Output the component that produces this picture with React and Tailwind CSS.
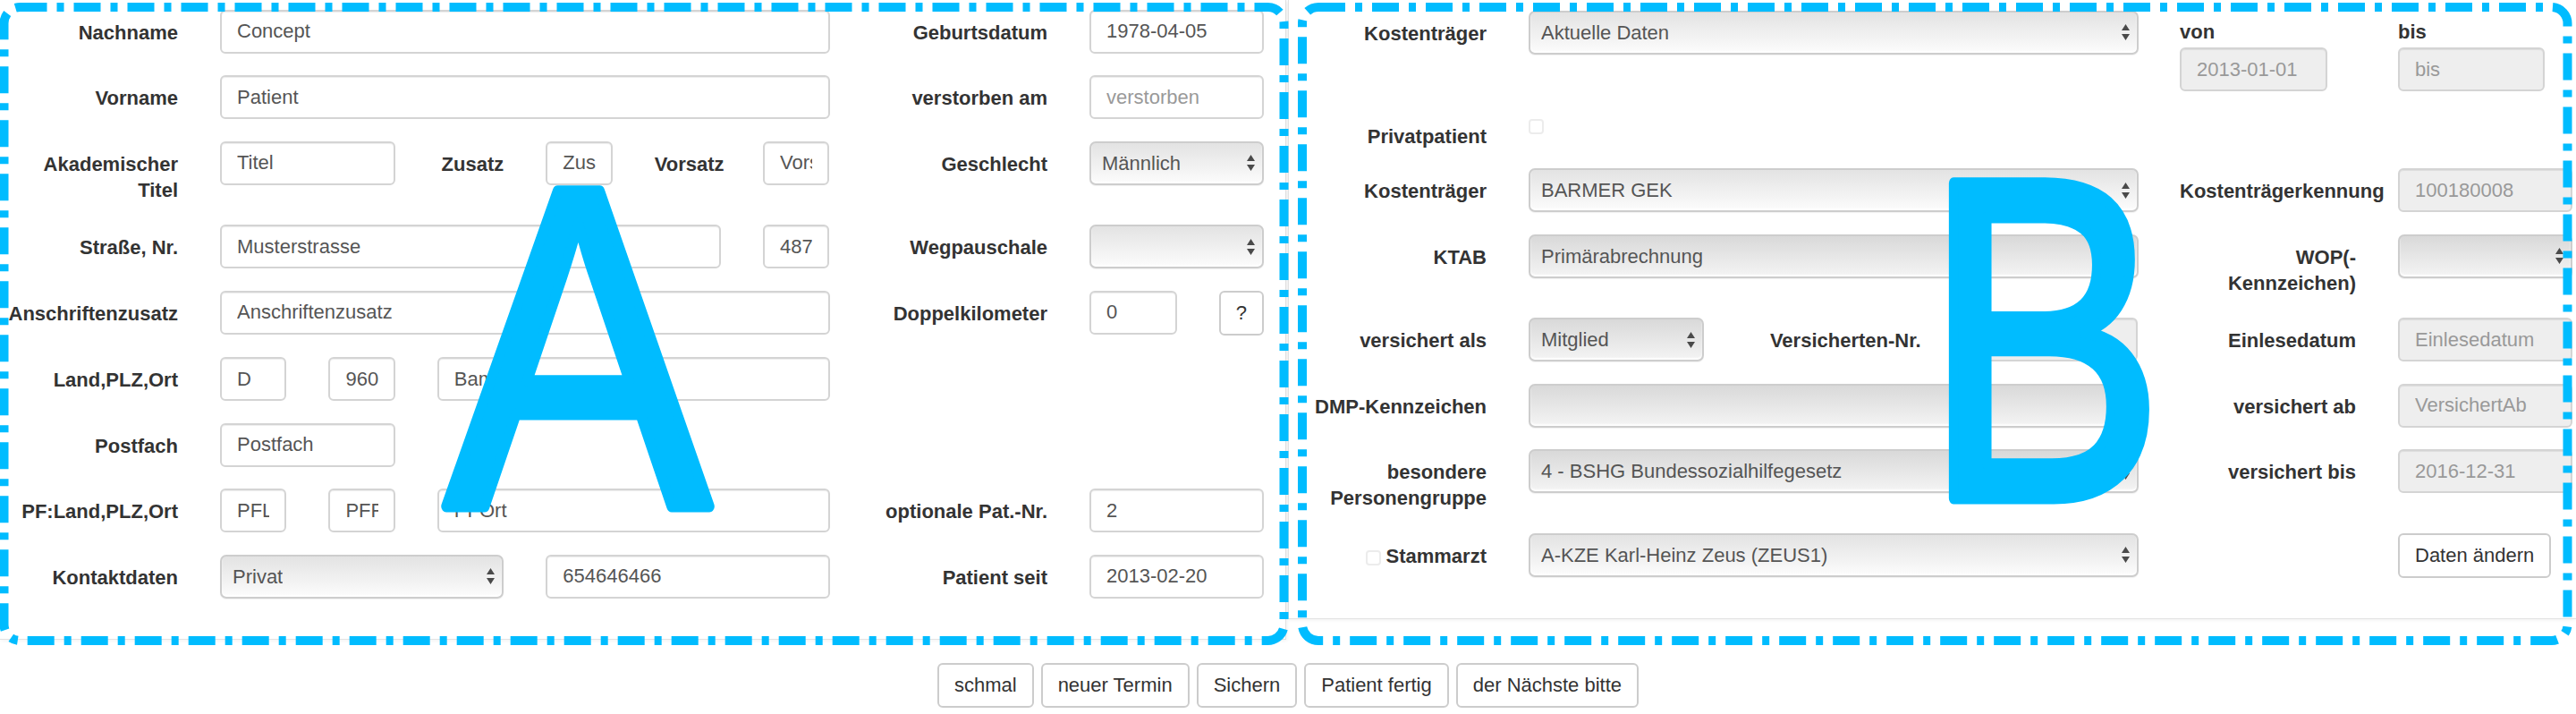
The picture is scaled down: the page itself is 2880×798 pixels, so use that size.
import React from 'react';

const inputBase =
  "h-[49px] w-full min-w-0 rounded-[6px] border-2 border-[#d4d4d4] px-[17px] text-[22px] outline-none shadow-[inset_0_1px_1px_rgba(0,0,0,0.075)] placeholder:text-[#999]";
const inputCls = inputBase + " bg-white text-[#555]";
const disabledCls = inputBase + " bg-[#eee] text-[#999]";

const Arrows = () => (
  <svg width="9" height="18" viewBox="0 0 9 18" className="shrink-0">
    <path d="M4.5 0 L9 7 H0 Z M0 11 H9 L4.5 18 Z" fill="#4a4a4a" />
  </svg>
);

const Select = ({ value, disabled, className = "" }) => (
  <div
    className={
      (disabled
        ? "bg-linear-to-b from-[#d9d9d9] to-[#f4f4f4] "
        : "bg-linear-to-b from-[#e3e3e3] to-[#fcfcfc] ") +
      "flex h-[49px] min-w-0 items-center justify-between rounded-[7px] border-2 border-[#cdcdcd] pl-[12px] pr-[8px] text-[#555] shadow-[inset_0_-2px_2px_rgba(255,255,255,0.9),0_1px_1px_rgba(0,0,0,0.06)] " +
      className
    }
  >
    <span className="truncate">{value}</span>
    <Arrows />
  </div>
);

const Label = ({ children, className = "" }) => (
  <div className={"shrink-0 pt-[11px] text-right font-bold leading-[29px] text-[#333] " + className}>
    {children}
  </div>
);

const Btn = ({ children, className = "" }) => (
  <button className={"h-[50px] rounded-[6px] border-2 border-[#ccc] bg-white px-[17px] text-[22px] leading-[30px] text-[#333] " + className}>
    {children}
  </button>
);

const Check = ({ className = "" }) => (
  <span className={"block h-[17px] w-[17px] rounded-[4px] border-2 border-[#ececec] bg-white " + className} />
);

// one form row: label, 12 column area, optional label + control on the right
const Row = ({ label, right, rightLabel, className = "mb-[24.5px]", children }) => (
  <div className={"flex items-start " + className}>
    {label}
    <div className="ml-[47px] grid w-[681.5px] shrink-0 grid-cols-12 gap-x-[47px]">{children}</div>
    {rightLabel !== undefined && <Label className="ml-[46.5px] w-[197px]">{rightLabel}</Label>}
    {right && <div className="ml-[47px] w-[195px] shrink-0">{right}</div>}
  </div>
);

const PanelA = () => (
  <div className="w-[1438px] shrink-0 border-r border-b border-[#e2e2e2] pt-[10.5px] pb-[45.5px] shadow-[1px_1px_4px_rgba(0,0,0,0.06)]">
    <Row label={<Label className="w-[199px]">Nachname</Label>} rightLabel="Geburtsdatum" right={<input readOnly defaultValue="1978-04-05" className={inputCls} />}>
      <input readOnly defaultValue="Concept" className={inputCls + " col-span-12"} />
    </Row>
    <Row label={<Label className="w-[199px]">Vorname</Label>} rightLabel="verstorben am" right={<input readOnly placeholder="verstorben" className={inputCls} />}>
      <input readOnly defaultValue="Patient" className={inputCls + " col-span-12"} />
    </Row>
    <Row label={<Label className="w-[199px]">Akademischer<br />Titel</Label>} rightLabel="Geschlecht" right={<Select value="Männlich" />}>
      <input readOnly defaultValue="Titel" className={inputCls + " col-span-4"} />
      <Label className="col-span-2">Zusatz</Label>
      <input readOnly defaultValue="Zus" className={inputCls + " col-span-2"} />
      <Label className="col-span-2">Vorsatz</Label>
      <input readOnly defaultValue="Vors" className={inputCls + " col-span-2"} />
    </Row>
    <Row label={<Label className="w-[199px]">Straße, Nr.</Label>} rightLabel="Wegpauschale" right={<Select value="" />}>
      <input readOnly defaultValue="Musterstrasse" className={inputCls + " col-span-10"} />
      <input readOnly defaultValue="487" className={inputCls + " col-span-2"} />
    </Row>
    <Row
      label={<Label className="w-[199px]">Anschriftenzusatz</Label>}
      rightLabel="Doppelkilometer"
      right={
        <div className="flex gap-[47px]">
          <input readOnly defaultValue="0" className={inputCls + " w-[75px]"} />
          <Btn>?</Btn>
        </div>
      }
    >
      <input readOnly defaultValue="Anschriftenzusatz" className={inputCls + " col-span-12"} />
    </Row>
    <Row label={<Label className="w-[199px]">Land,PLZ,Ort</Label>}>
      <input readOnly defaultValue="D" className={inputCls + " col-span-2"} />
      <input readOnly defaultValue="960" className={inputCls + " col-span-2"} />
      <input readOnly defaultValue="Bamberg" className={inputCls + " col-span-8"} />
    </Row>
    <Row label={<Label className="w-[199px]">Postfach</Label>}>
      <input readOnly defaultValue="Postfach" className={inputCls + " col-span-4"} />
    </Row>
    <Row label={<Label className="w-[199px]">PF:Land,PLZ,Ort</Label>} rightLabel="optionale Pat.-Nr." right={<input readOnly defaultValue="2" className={inputCls} />}>
      <input readOnly defaultValue="PFL" className={inputCls + " col-span-2"} />
      <input readOnly defaultValue="PFF" className={inputCls + " col-span-2"} />
      <input readOnly defaultValue="PFOrt" className={inputCls + " col-span-8"} />
    </Row>
    <Row className="" label={<Label className="w-[199px]">Kontaktdaten</Label>} rightLabel="Patient seit" right={<input readOnly defaultValue="2013-02-20" className={inputCls} />}>
      <Select value="Privat" className="col-span-6" />
      <input readOnly defaultValue="654646466" className={inputCls + " col-span-6"} />
    </Row>
  </div>
);

const PanelB = () => (
  <div className="ml-[2px] w-[1440px] shrink-0 border-l border-b border-[#e2e2e2] pl-[22px] pt-[11.5px] pb-[45.5px] shadow-[-1px_1px_4px_rgba(0,0,0,0.06)]">
    <div className="mb-[24.5px] flex items-start">
      <Label className="w-[199px]">Kostenträger</Label>
      <div className="ml-[47px] w-[681.5px] shrink-0">
        <Select value="Aktuelle Daten" />
      </div>
      <div className="ml-[46.5px] w-[197px] shrink-0 pt-[9.5px]">
        <div className="font-bold leading-[29px] text-[#333]">von</div>
        <input readOnly defaultValue="2013-01-01" className={disabledCls + " mt-[3px] !w-[165px]"} />
      </div>
      <div className="ml-[47px] w-[195px] shrink-0 pt-[9.5px]">
        <div className="font-bold leading-[29px] text-[#333]">bis</div>
        <input readOnly placeholder="bis" className={disabledCls + " mt-[3px] !w-[164px]"} />
      </div>
    </div>
    <Row className="mb-[24.5px] h-[37px]" label={<Label className="w-[199px]">Privatpatient</Label>}>
      <Check className="col-span-1 mt-[6px]" />
    </Row>
    <Row label={<Label className="w-[199px]">Kostenträger</Label>} rightLabel="Kostenträgerkennung" right={<input readOnly defaultValue="100180008" className={disabledCls} />}>
      <Select value="BARMER GEK" className="col-span-12" />
    </Row>
    <Row label={<Label className="w-[199px]">KTAB</Label>} rightLabel={<>WOP(-<br />Kennzeichen)</>} right={<Select value="" disabled />}>
      <Select value="Primärabrechnung" disabled className="col-span-12" />
    </Row>
    <Row label={<Label className="w-[199px]">versichert als</Label>} rightLabel="Einlesedatum" right={<input readOnly placeholder="Einlesedatum" className={disabledCls} />}>
      <Select value="Mitglied" disabled className="col-span-4" />
      <Label className="col-span-4">Versicherten-Nr.</Label>
      <input readOnly className={disabledCls + " col-span-4"} />
    </Row>
    <Row label={<Label className="w-[199px]">DMP-Kennzeichen</Label>} rightLabel="versichert ab" right={<input readOnly placeholder="VersichertAb" className={disabledCls} />}>
      <Select value="" disabled className="col-span-12" />
    </Row>
    <Row label={<Label className="w-[199px]">besondere<br />Personengruppe</Label>} rightLabel="versichert bis" right={<input readOnly defaultValue="2016-12-31" className={disabledCls} />}>
      <Select value="4 - BSHG Bundessozialhilfegesetz" disabled className="col-span-12" />
    </Row>
    <Row
      className=""
      label={
        <Label className="flex w-[199px] justify-end">
          <Check className="mr-[6px] mt-[8px]" />
          Stammarzt
        </Label>
      }
      rightLabel=""
      right={<Btn>Daten ändern</Btn>}
    >
      <Select value="A-KZE Karl-Heinz Zeus (ZEUS1)" className="col-span-12" />
    </Row>
  </div>
);

export default function App() {
  return (
    <div className="relative h-[798px] w-[2880px] overflow-hidden bg-white font-['Liberation_Sans',Arial,sans-serif] text-[22px] text-[#333]">
      <div className="flex items-start">
        <PanelA />
        <PanelB />
      </div>
      <div className="mt-[26px] flex justify-center gap-[8px]">
        <Btn>schmal</Btn>
        <Btn>neuer Termin</Btn>
        <Btn>Sichern</Btn>
        <Btn>Patient fertig</Btn>
        <Btn>der Nächste bitte</Btn>
      </div>

      {/* annotation overlay */}
      <svg className="pointer-events-none absolute left-0 top-0" width="2880" height="798">
        <g fill="none" stroke="#00bcff" strokeWidth="10" strokeDasharray="30 11 8 11">
          <rect x="4.5" y="8" width="1431" height="708" rx="18" />
          <rect x="1456" y="8" width="1414.5" height="708" rx="18" />
        </g>
        <g fill="#00bcff" stroke="#00bcff" strokeWidth="13" strokeLinejoin="round" fontFamily="'Liberation Sans', Arial, sans-serif" fontSize="512">
          <text x="498" y="566" textLength="296" lengthAdjust="spacingAndGlyphs">A</text>
          <text x="2151" y="557" textLength="268" lengthAdjust="spacingAndGlyphs">B</text>
        </g>
      </svg>
    </div>
  );
}
